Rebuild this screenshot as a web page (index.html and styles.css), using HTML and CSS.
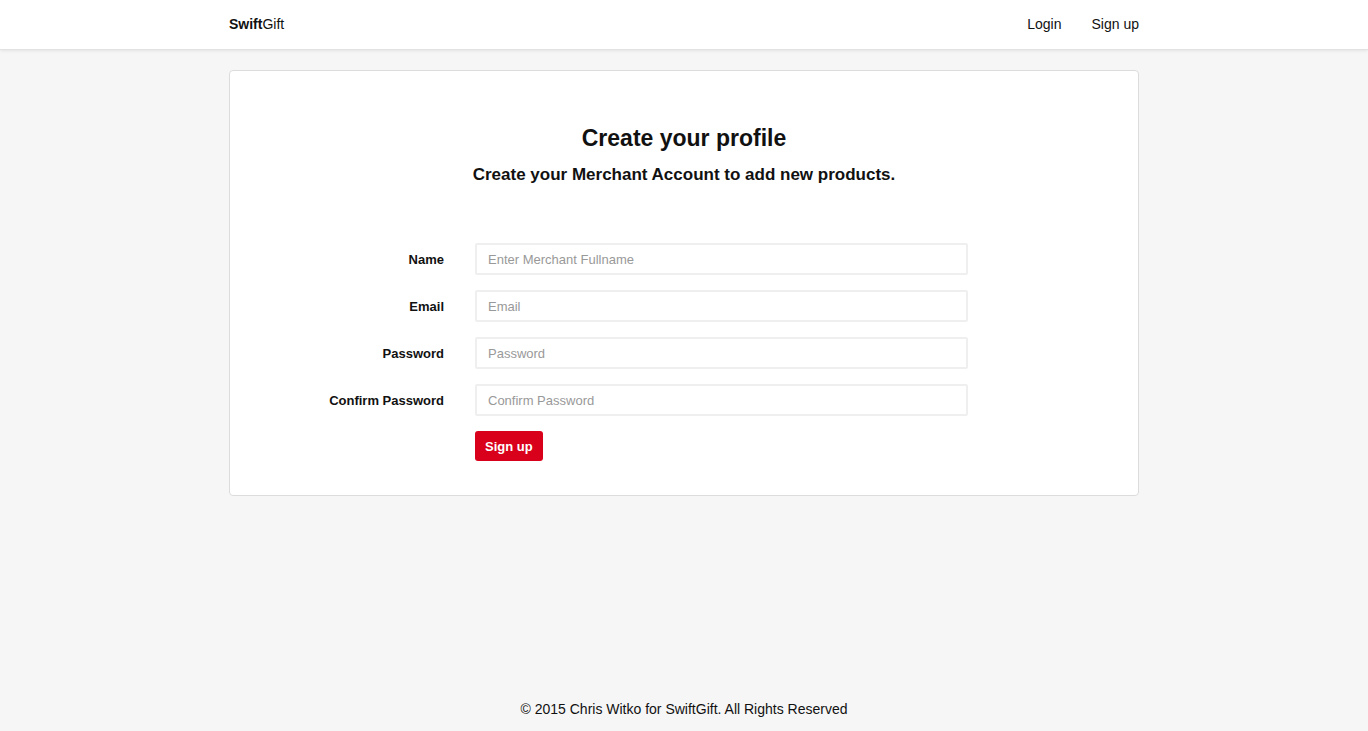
FILE: index.html
```html
<!DOCTYPE html>
<html>
<head>
<meta charset="utf-8">
<title>SwiftGift - Create your profile</title>
<link rel="stylesheet" href="styles.css">
</head>
<body>
<header class="navbar">
  <div class="container nav-inner">
    <a class="brand" href="#"><b>Swift</b>Gift</a>
    <nav class="nav-links">
      <a href="#">Login</a>
      <a href="#">Sign up</a>
    </nav>
  </div>
</header>
<main class="container">
  <section class="card">
    <h1 class="title">Create your profile</h1>
    <h2 class="subtitle">Create your Merchant Account to add new products.</h2>
    <form class="form">
      <div class="row">
        <label class="label">Name</label>
        <input class="input" type="text" placeholder="Enter Merchant Fullname">
      </div>
      <div class="row">
        <label class="label">Email</label>
        <input class="input" type="text" placeholder="Email">
      </div>
      <div class="row">
        <label class="label">Password</label>
        <input class="input" type="password" placeholder="Password">
      </div>
      <div class="row">
        <label class="label">Confirm Password</label>
        <input class="input" type="password" placeholder="Confirm Password">
      </div>
      <div class="row">
        <span class="label"></span>
        <div><button class="btn" type="button">Sign up</button></div>
      </div>
    </form>
  </section>
</main>
<footer class="footer">© 2015 Chris Witko for SwiftGift. All Rights Reserved</footer>
</body>
</html>
```

FILE: styles.css
```css
* { box-sizing: border-box; }
html, body { height: 100%; }
body {
  margin: 0;
  background: #f6f6f6;
  font-family: "Liberation Sans", Arial, Helvetica, sans-serif;
  font-size: 14px;
  color: #111;
  display: flex;
  flex-direction: column;
}
.container {
  width: 940px;
  margin: 0 auto;
  padding: 0 15px;
}
.navbar {
  background: #fff;
  height: 50px;
  border-bottom: 1px solid #e2e2e2;
  box-shadow: 0 1px 3px rgba(0,0,0,0.08);
}
.nav-inner {
  display: flex;
  justify-content: space-between;
  align-items: center;
  height: 47px;
}
.brand {
  color: #111;
  text-decoration: none;
  font-size: 14px;
}
.brand b { font-weight: bold; }
.nav-links { display: flex; gap: 30px; }
.nav-links a {
  color: #111;
  text-decoration: none;
  font-size: 14px;
}
main.container { flex: 1; width: 940px; }
.card {
  margin-top: 20px;
  background: #fff;
  border: 1px solid #dcdcdc;
  border-radius: 4px;
  height: 426px;
  padding-top: 53px;
}
.title {
  margin: 0;
  text-align: center;
  font-size: 23px;
  font-weight: bold;
  line-height: 28px;
}
.subtitle {
  margin: 12px 0 0;
  text-align: center;
  font-size: 17px;
  font-weight: bold;
  line-height: 22px;
}
.form {
  margin-top: 57px;
  display: flex;
  flex-direction: column;
  gap: 15px;
}
.row {
  display: grid;
  grid-template-columns: 214px 493px;
  column-gap: 31px;
  align-items: center;
}
.label {
  text-align: right;
  font-size: 13px;
  font-weight: bold;
  color: #111;
}
.input {
  height: 32px;
  width: 493px;
  border: 2px solid #efefef;
  border-radius: 2px;
  padding: 0 11px;
  font-family: "Liberation Sans", Arial, sans-serif;
  font-size: 13px;
  color: #333;
  outline: none;
  background: #fff;
}
.input::placeholder { color: #999; }
.btn {
  height: 30px;
  padding: 0 10px;
  background: #d9001b;
  color: #fff;
  border: none;
  border-radius: 3px;
  font-family: "Liberation Sans", Arial, sans-serif;
  font-size: 13px;
  font-weight: bold;
}
.footer {
  text-align: center;
  font-size: 14px;
  padding: 0 0 12px;
  line-height: 20px;
  color: #111;
}
```
